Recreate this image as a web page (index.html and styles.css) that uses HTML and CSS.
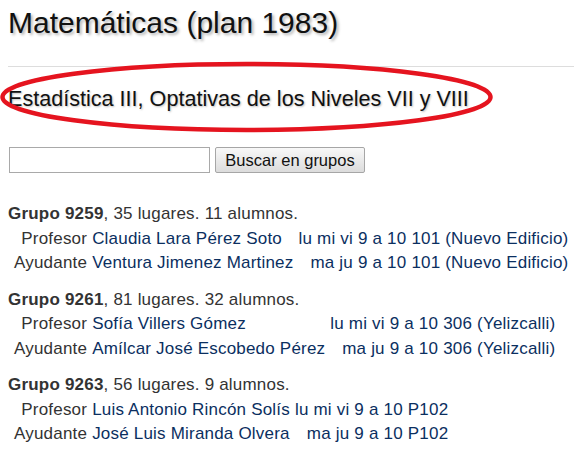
FILE: index.html
```html
<!DOCTYPE html>
<html lang="es">
<head>
<meta charset="utf-8">
<title>Matemáticas (plan 1983)</title>
<link rel="stylesheet" href="styles.css">
</head>
<body>
<div class="page">
  <h1 class="title">Matemáticas (plan 1983)</h1>
  <hr class="rule">
  <div class="subject">
    <h2 class="subtitle">Estadística III, Optativas de los Niveles VII y VIII</h2>
    <svg class="mark" width="500" height="76" viewBox="0 0 500 76" aria-hidden="true">
      <ellipse cx="246.5" cy="37" rx="244" ry="33" fill="none" stroke="#e5141f" stroke-width="4.5"/>
    </svg>
  </div>
  <form class="search">
    <input class="search-input" type="text">
    <button class="search-btn" type="button">Buscar en grupos</button>
  </form>

  <div class="groups">
    <section class="group">
      <div class="group-head"><b>Grupo 9259</b>, 35 lugares. 11 alumnos.</div>
      <div class="staff">
        <span class="role">Profesor</span><span class="name">Claudia Lara Pérez Soto</span><span class="sched">lu mi vi 9 a 10</span><span class="room">101 (Nuevo Edificio)</span>
        <span class="role">Ayudante</span><span class="name">Ventura Jimenez Martinez</span><span class="sched">ma ju 9 a 10</span><span class="room">101 (Nuevo Edificio)</span>
      </div>
    </section>
    <section class="group">
      <div class="group-head"><b>Grupo 9261</b>, 81 lugares. 32 alumnos.</div>
      <div class="staff">
        <span class="role">Profesor</span><span class="name">Sofía Villers Gómez</span><span class="sched">lu mi vi 9 a 10</span><span class="room">306 (Yelizcalli)</span>
        <span class="role">Ayudante</span><span class="name">Amílcar José Escobedo Pérez</span><span class="sched">ma ju 9 a 10</span><span class="room">306 (Yelizcalli)</span>
      </div>
    </section>
    <section class="group">
      <div class="group-head"><b>Grupo 9263</b>, 56 lugares. 9 alumnos.</div>
      <div class="staff">
        <span class="role">Profesor</span><span class="name">Luis Antonio Rincón Solís</span><span class="sched">lu mi vi 9 a 10</span><span class="room">P102</span>
        <span class="role">Ayudante</span><span class="name">José Luis Miranda Olvera</span><span class="sched">ma ju 9 a 10</span><span class="room">P102</span>
      </div>
    </section>
  </div>
</div>
</body>
</html>
```

FILE: styles.css
```css
html, body {
  margin: 0;
  padding: 0;
  background: #ffffff;
}

body {
  font-family: "Liberation Sans", Arial, sans-serif;
  color: #333333;
}

.page {
  padding: 6px 0 0 8px;
}

.title {
  margin: 0;
  font-size: 30px;
  line-height: 34px;
  font-weight: normal;
  color: #111111;
  text-shadow: 2px 2px 3px rgba(0, 0, 0, 0.3);
}

.rule {
  margin: 26px 0 0 0;
  border: 0;
  border-top: 1px solid #dddddd;
  height: 0;
}

.subject {
  position: relative;
  margin-top: 18px;
}

.subtitle {
  margin: 0;
  font-size: 21.6px;
  line-height: 27px;
  font-weight: normal;
  color: #111111;
  text-shadow: 1px 1px 2px rgba(0, 0, 0, 0.25);
}

.mark {
  position: absolute;
  left: -8px;
  top: -25px;
  pointer-events: none;
}

.search {
  display: flex;
  align-items: center;
  margin: 35px 0 0 1px;
}

.search-input {
  box-sizing: border-box;
  width: 201px;
  height: 26px;
  margin: 0;
  border: 1px solid #a9a9a9;
  padding: 2px 4px;
  font-family: "Liberation Sans", Arial, sans-serif;
  font-size: 16px;
}

.search-btn {
  box-sizing: border-box;
  width: 150px;
  height: 26px;
  margin: 0 0 0 5px;
  padding: 0;
  border: 1px solid #a6a6a6;
  border-radius: 2px;
  background: linear-gradient(#f8f8f8, #dcdcdc);
  font-family: "Liberation Sans", Arial, sans-serif;
  font-size: 16.5px;
  color: #111111;
}

.groups {
  margin-top: 29px;
  font-size: 17px;
  line-height: 24.5px;
  letter-spacing: 0.2px;
}

.group {
  margin-bottom: 12px;
}

.group-head {
  color: #333333;
}

.group-head b {
  font-weight: bold;
}

.staff {
  display: grid;
  grid-template-columns: auto auto auto auto;
  justify-content: start;
  column-gap: 5px;
  padding-left: 6px;
}

.role {
  text-align: right;
  color: #333333;
}

.name {
  color: #0b2f5f;
}

.sched {
  text-align: right;
  color: #0b2f5f;
}

.room {
  color: #0b2f5f;
}
```
